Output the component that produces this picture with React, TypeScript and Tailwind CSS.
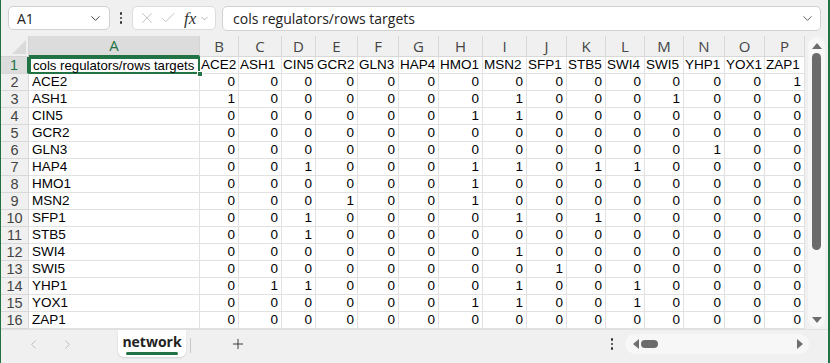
import { ChevronDown, ChevronLeft, ChevronRight, Plus, X, Check } from "lucide-react";

const cols = ["B", "C", "D", "E", "F", "G", "H", "I", "J", "K", "L", "M", "N", "O", "P"];
const names = ["ACE2", "ASH1", "CIN5", "GCR2", "GLN3", "HAP4", "HMO1", "MSN2", "SFP1", "STB5", "SWI4", "SWI5", "YHP1", "YOX1", "ZAP1"];

const data = [
  "000000000000001",
  "100000010001000",
  "000000110000000",
  "000000000000000",
  "000000000000100",
  "001000110110000",
  "000000100000000",
  "000100100000000",
  "001000010100000",
  "001000000000000",
  "000000010000000",
  "000000001000000",
  "011000010010000",
  "000000110010000",
  "000000000000000",
];

const template = "grid-cols-[28px_171px_39px_43px_34px_42px_41px_40px_44px_44px_40px_39px_39px_39px_41px_40px_40px]";

function VDots() {
  return (
    <div className="flex flex-col gap-[2px] items-center">
      <span className="size-[2.5px] rounded-full bg-[#333]" />
      <span className="size-[2.5px] rounded-full bg-[#333]" />
      <span className="size-[2.5px] rounded-full bg-[#333]" />
    </div>
  );
}

export default function App() {
  return (
    <div className="w-[830px] h-[363px] bg-[#f0f0f0] border-l border-r-2 border-[#217346] flex flex-col overflow-hidden font-['Liberation_Sans',Arial,sans-serif]">
      {/* formula bar */}
      <div className="h-[36px] flex items-center pl-[7px] pr-[7px] shrink-0">
        <div className="w-[102px] h-[24px] bg-white border border-[#d1d1d1] rounded-[5px] flex items-center justify-between pl-[8px] pr-[6px] font-['Open_Sans',sans-serif] text-[14px] text-[#222]">
          <span>A1</span>
          <ChevronDown className="size-[15px] text-[#444]" strokeWidth={1.6} />
        </div>
        <div className="w-[22px] flex justify-center">
          <VDots />
        </div>
        <div className="w-[84px] h-[24px] bg-white border border-[#dcdcdc] rounded-[5px] flex items-center pl-[5px] gap-[3px] text-[#b8b8b8]">
          <X className="size-[18px]" strokeWidth={1.1} />
          <Check className="size-[18px]" strokeWidth={1.1} />
          <span className="font-['Liberation_Serif',serif] italic text-[17px] leading-none text-[#333] ml-[4px]">fx</span>
          <ChevronDown className="size-[11px] text-[#999]" strokeWidth={1.6} />
        </div>
        <div className="ml-[6px] flex-1 h-[25px] bg-white border border-[#d1d1d1] rounded-[5px] flex items-center justify-between pl-[10px] pr-[5px] font-['Open_Sans',sans-serif] text-[14px] text-[#222]">
          <span>cols regulators/rows targets</span>
          <ChevronDown className="size-[15px] text-[#555]" strokeWidth={1.5} />
        </div>
      </div>

      {/* sheet */}
      <div className="flex shrink-0">
        <div className={`grid ${template} auto-rows-[17px] grid-rows-[21px] bg-white leading-none`}>
          {/* corner */}
          <div className="relative bg-[#f0f0f0] border-r border-b border-[#d4d4d4]">
            <div className="absolute right-[2px] bottom-[2px] size-0 border-l-[14px] border-l-transparent border-b-[14px] border-b-[#dadada]" />
          </div>
          <div className="bg-[#dcdcdc] border-r border-b-2 border-[#217346] border-r-[#d4d4d4] flex items-center justify-center text-[15px] text-[#217346] font-['Open_Sans',sans-serif]">
            A
          </div>
          {cols.map(c => (
            <div key={c} className="bg-[#f0f0f0] border-r border-b border-[#d8d8d8] flex items-center justify-center text-[15px] text-[#444] font-['Open_Sans',sans-serif]">
              {c}
            </div>
          ))}

          {/* row 1 */}
          <div className="bg-[#dcdcdc] border-r-2 border-r-[#217346] border-b border-b-[#d8d8d8] flex items-center justify-center text-[14.5px] text-[#217346]">
            1
          </div>
          <div className="relative border-2 border-[#217346] flex items-center pl-[2px] text-[13.2px] text-black whitespace-nowrap">
            cols regulators/rows targets
            <span className="absolute -right-[5px] -bottom-[5px] size-[6px] bg-[#217346] border border-white" />
          </div>
          {names.map(n => (
            <div key={n} className="border-r border-b border-[#e1e1e1] flex items-center pl-[1px] text-[13.5px] text-black whitespace-nowrap">
              {n}
            </div>
          ))}

          {data.map((row, r) => (
            <>
              <div key={`h${r}`} className="bg-[#f0f0f0] border-r border-b border-[#d8d8d8] flex items-center justify-center text-[14.5px] text-[#444]">
                {r + 2}
              </div>
              <div key={`a${r}`} className="border-r border-b border-[#e1e1e1] flex items-center pl-[3px] text-[13.5px] text-black">
                {names[r]}
              </div>
              {row.split("").map((v, c) => (
                <div key={`${r}-${c}`} className="border-r border-b border-[#e1e1e1] flex items-center justify-end pr-[3px] text-[13.5px] text-black">
                  {v}
                </div>
              ))}
            </>
          ))}
        </div>

        {/* vertical scrollbar */}
        <div className="w-[22px] pl-[3px] pr-[2px] pt-[1px]">
          <div className="h-[291px] bg-[#f7f7f7] rounded-full flex flex-col items-center pt-[6px] pb-[5px]">
            <span className="size-0 border-x-[5px] border-x-transparent border-b-[6px] border-b-[#6e6e6e]" />
            <div className="mt-[4px] w-[9px] h-[197px] rounded-full bg-[#6b6b6b]" />
            <div className="flex-1" />
            <span className="size-0 border-x-[5px] border-x-transparent border-t-[6px] border-t-[#6e6e6e]" />
          </div>
        </div>
      </div>

      {/* sheet tabs */}
      <div className="flex-1 flex items-start border-t border-[#e0e0e0]">
        <div className="flex items-center h-[28px] pl-[25px] gap-[19px] text-[#b8b8b8]">
          <ChevronLeft className="size-[15px]" strokeWidth={1.4} />
          <ChevronRight className="size-[15px]" strokeWidth={1.4} />
        </div>
        <div className="ml-[43px] w-[68px] h-[27px] bg-white rounded-b-[6px] shadow-[0_1px_2px_rgba(0,0,0,0.12)] flex flex-col items-center justify-center font-['Open_Sans',sans-serif] text-[14px] font-bold text-[#222]">
          <span className="leading-[18px]">network</span>
          <span className="w-[52px] h-[3px] bg-[#217346] rounded-full mt-[1px]" />
        </div>
        <div className="ml-[4px] mt-[8px] w-px h-[15px] bg-[#c8c8c8]" />
        <div className="ml-[39px] h-[28px] flex items-center text-[#333]">
          <Plus className="size-[16px]" strokeWidth={1.4} />
        </div>
        <div className="flex-1" />
        <div className="h-[28px] flex items-center mr-[12px]">
          <VDots />
        </div>
        <div className="mt-[4px] mr-[19px] w-[184px] h-[20px] bg-[#f7f7f7] rounded-full flex items-center pl-[8px] pr-[6px]">
          <span className="size-0 border-y-[5px] border-y-transparent border-r-[6px] border-r-[#6e6e6e]" />
          <span className="ml-[2px] w-[17px] h-[8px] rounded-full bg-[#6b6b6b]" />
          <div className="flex-1" />
          <span className="size-0 border-y-[5px] border-y-transparent border-l-[6px] border-l-[#6e6e6e]" />
        </div>
      </div>
    </div>
  );
}
